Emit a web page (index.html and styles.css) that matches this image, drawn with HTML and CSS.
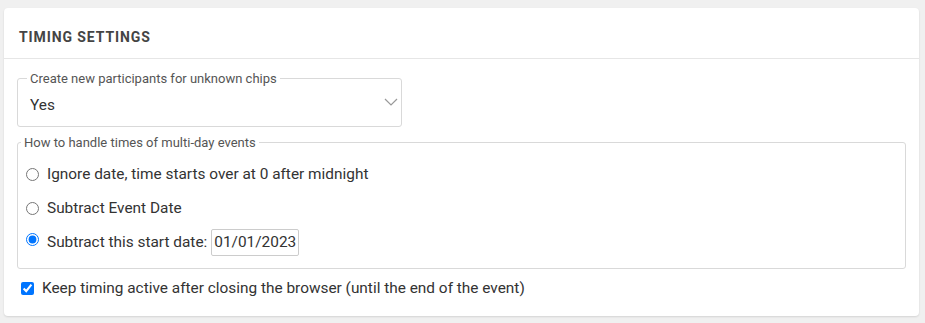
FILE: index.html
```html
<!DOCTYPE html>
<html lang="en">
<head>
    <meta charset="UTF-8">
    <title>Timing Settings</title>
    <link rel="stylesheet" href="styles.css">
</head>
<body>
    <div class="panel">
        <div class="panel-header">Timing Settings</div>
        <div class="panel-body">
            <fieldset class="select-box">
                <legend>Create new participants for unknown chips</legend>
                <div class="select-value">
                    <span>Yes</span>
                    <svg class="chevron" width="14" height="8" viewBox="0 0 14 8"><path d="M1 1 L7 7 L13 1" fill="none" stroke="#999" stroke-width="1.2"/></svg>
                </div>
            </fieldset>

            <fieldset class="radio-box">
                <legend>How to handle times of multi-day events</legend>
                <label class="option"><input type="radio" name="mode"> Ignore date, time starts over at 0 after midnight</label>
                <label class="option"><input type="radio" name="mode"> Subtract Event Date</label>
                <label class="option with-date"><input type="radio" name="mode" checked> Subtract this start date: <span class="date-input">01/01/2023</span></label>
            </fieldset>

            <label class="check"><input type="checkbox" checked> Keep timing active after closing the browser (until the end of the event)</label>
        </div>
    </div>
</body>
</html>
```

FILE: styles.css
```css
body {
    margin: 0;
    padding: 8px 6px 6px 4px;
    background: #f0f0f0;
    font-family: Roboto, "Noto Sans", sans-serif;
    color: #333;
}
.panel {
    background: #fff;
    border-radius: 4px;
    box-shadow: 0 1px 2px rgba(0,0,0,0.12);
    height: 308px;
}
.panel-header {
    height: 50px;
    line-height: 58px;
    padding: 0 15px;
    border-bottom: 1px solid #e6e6e6;
    font-size: 14px;
    font-weight: bold;
    letter-spacing: 0.9px;
    text-transform: uppercase;
    color: #444;
}
.panel-body {
    padding: 12px 13px 0 13px;
}
fieldset {
    border: 1px solid #d9d9d9;
    border-radius: 3px;
    margin: 0;
    padding: 0 12px;
}
legend {
    font-size: 13px;
    color: #555;
    padding: 0 3px;
    margin-left: -3px;
}
.select-box {
    width: 359px;
    height: 54px;
}
.select-value {
    display: flex;
    justify-content: space-between;
    align-items: center;
    font-size: 15.4px;
    padding-top: 10px;
}
.chevron {
    margin-right: -9px;
    margin-top: -6px;
}
.radio-box {
    margin-top: 8px;
    height: 132px;
    padding: 0 6px;
}
.option {
    display: flex;
    align-items: center;
    font-size: 15.4px;
    height: 34px;
}
.option:first-of-type {
    margin-top: 7px;
}
.option input {
    margin: 0 8px 0 2px;
    width: 13px;
    height: 13px;
}
.with-date input {
    margin-top: -6px;
}
.date-input {
    display: inline-block;
    border: 1px solid #ccc;
    border-radius: 2px;
    padding: 4px 2px;
    margin-left: 4px;
    line-height: 17px;
}
.check {
    display: flex;
    align-items: center;
    font-size: 15.4px;
    margin-top: 10px;
    padding-left: 4px;
}
.check input {
    margin: 0 8px 0 0;
    width: 13px;
    height: 13px;
}
```
